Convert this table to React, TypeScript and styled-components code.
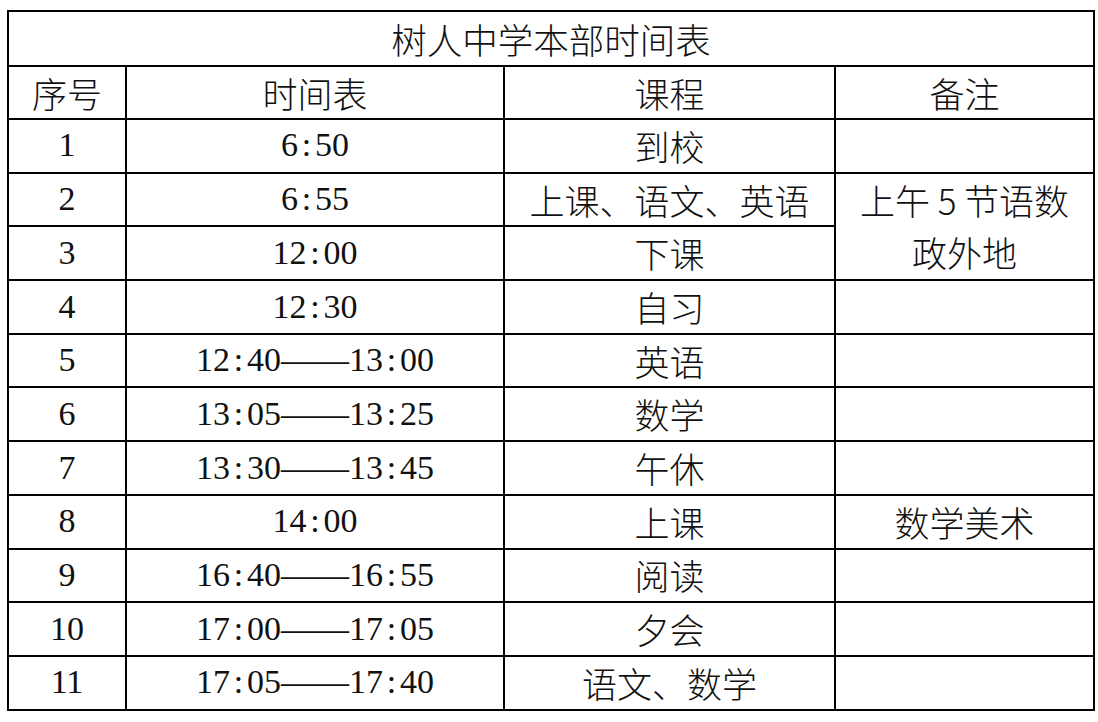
import React from 'react';
import styled, { createGlobalStyle } from 'styled-components';

const GlobalStyle = createGlobalStyle`
  html, body {
    margin: 0;
    padding: 0;
    background: #ffffff;
  }
  body {
    font-family: "Liberation Serif", "Noto Sans CJK SC", serif;
    color: #111111;
  }
`;

const Page = styled.div`
  padding: 10px 0 0 7px;
`;

const Table = styled.table`
  width: 1086px;
  border-collapse: collapse;
  table-layout: fixed;
  border: 2px solid #000;
`;

const TitleCell = styled.th`
  height: 53px;
  border: 2px solid #000;
  font-family: "Noto Sans CJK SC", sans-serif;
  font-weight: 300;
  font-size: 35.5px;
  line-height: 1;
  text-align: center;
  padding: 0;
`;

const HeadCell = styled.th`
  height: 51px;
  border: 2px solid #000;
  font-family: "Noto Sans CJK SC", sans-serif;
  font-weight: 300;
  font-size: 35px;
  line-height: 1;
  text-align: center;
  padding: 0;
`;

const Cell = styled.td<{ $cjk?: boolean }>`
  height: 51.7px;
  border: 2px solid #000;
  font-family: ${(p) =>
    p.$cjk ? '"Noto Sans CJK SC", sans-serif' : '"Liberation Serif", "Noto Sans CJK SC", serif'};
  font-weight: ${(p) => (p.$cjk ? 300 : 400)};
  font-size: ${(p) => (p.$cjk ? '35px' : '34px')};
  line-height: 1.2;
  text-align: center;
  vertical-align: middle;
  padding: 0;
`;

const Colon = styled.span`
  display: inline-block;
  width: 0.5em;
  text-align: center;
`;

const Note = styled.div`
  width: 225px;
  margin: 0 auto;
  line-height: 52px;
  text-align: center;
`;

type Row = {
  no: number;
  time: string;
  course: string;
  note?: string;
  noteSpan?: number;
  skipNote?: boolean;
};

const rows: Row[] = [
  { no: 1, time: '6:50', course: '到校', note: '' },
  { no: 2, time: '6:55', course: '上课、语文、英语', note: '上午 5 节语数政外地', noteSpan: 2 },
  { no: 3, time: '12:00', course: '下课', skipNote: true },
  { no: 4, time: '12:30', course: '自习', note: '' },
  { no: 5, time: '12:40——13:00', course: '英语', note: '' },
  { no: 6, time: '13:05——13:25', course: '数学', note: '' },
  { no: 7, time: '13:30——13:45', course: '午休', note: '' },
  { no: 8, time: '14:00', course: '上课', note: '数学美术' },
  { no: 9, time: '16:40——16:55', course: '阅读', note: '' },
  { no: 10, time: '17:00——17:05', course: '夕会', note: '' },
  { no: 11, time: '17:05——17:40', course: '语文、数学', note: '' },
];

function TimeText({ value }: { value: string }) {
  const parts = value.split(':');
  return (
    <>
      {parts.map((part, i) => (
        <React.Fragment key={i}>
          {i > 0 && <Colon>:</Colon>}
          {part}
        </React.Fragment>
      ))}
    </>
  );
}

function App() {
  return (
    <Page>
      <GlobalStyle />
      <Table>
        <colgroup>
          <col style={{ width: 118 }} />
          <col style={{ width: 378 }} />
          <col style={{ width: 331 }} />
          <col style={{ width: 259 }} />
        </colgroup>
        <thead>
          <tr>
            <TitleCell colSpan={4}>树人中学本部时间表</TitleCell>
          </tr>
          <tr>
            <HeadCell>序号</HeadCell>
            <HeadCell>时间表</HeadCell>
            <HeadCell>课程</HeadCell>
            <HeadCell>备注</HeadCell>
          </tr>
        </thead>
        <tbody>
          {rows.map((r) => (
            <tr key={r.no}>
              <Cell>{r.no}</Cell>
              <Cell>
                <TimeText value={r.time} />
              </Cell>
              <Cell $cjk>{r.course}</Cell>
              {!r.skipNote && (
                <Cell $cjk rowSpan={r.noteSpan}>
                  {r.noteSpan ? <Note>{r.note}</Note> : r.note}
                </Cell>
              )}
            </tr>
          ))}
        </tbody>
      </Table>
    </Page>
  );
}

export default App;
